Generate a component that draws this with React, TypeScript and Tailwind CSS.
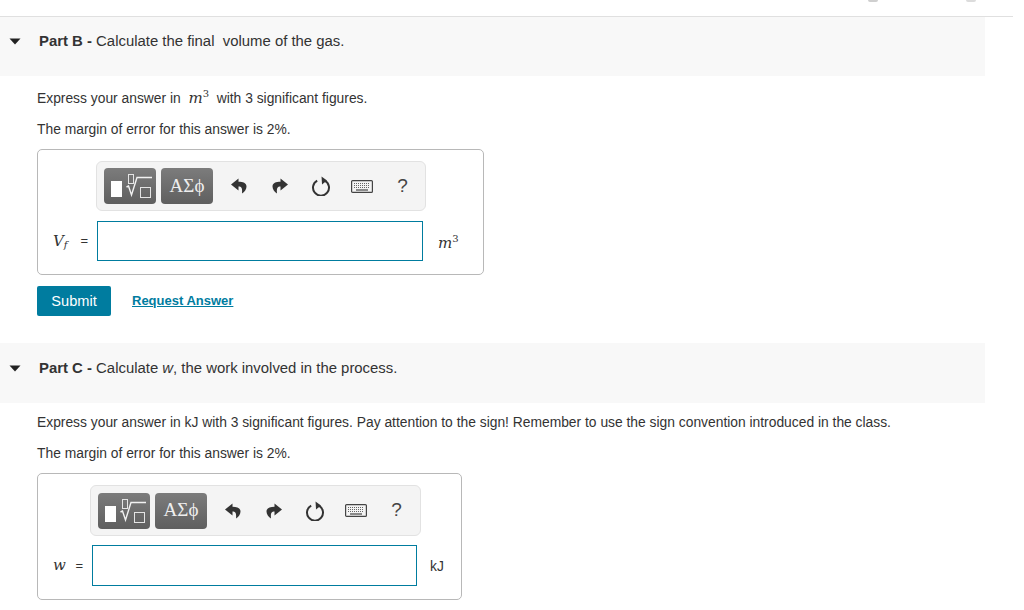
import React from "react";

const sans = "font-['Liberation_Sans',Arial,sans-serif]";
const mathFont = "font-['DejaVu_Serif','Liberation_Serif',serif]";
const greekFont = "font-['Liberation_Serif','Times_New_Roman',serif]";

const Caret = () => (
    <svg width="12" height="7" viewBox="0 0 12 7" className="block">
        <path d="M0.5 0.5h11L6 6.5z" fill="#222" />
    </svg>
);

const RadicalIcon = () => (
    <svg width="52" height="36" viewBox="0 0 52 36" fill="none" className="block">
        <rect x="7" y="13" width="11" height="16" fill="#fff" />
        <rect x="24.5" y="6.5" width="5" height="9" stroke="#e4e4e4" />
        <path d="M22.5 19l2-1 3 9 5.5-17.5h15" stroke="#f2f2f2" strokeWidth="1.4" />
        <rect x="36.5" y="19.5" width="10" height="10" stroke="#e4e4e4" />
    </svg>
);

const UndoIcon = () => (
    <svg width="16" height="16" viewBox="0 0 16 16" className="block">
        <path d="M7.5 0.5L0 6.5l7.5 6V8.6c3 0 4 1.4 3.5 6.9 3-2 4.5-4.5 4.5-7 0-3.5-3.5-4.7-8-4.7z" fill="#333" />
    </svg>
);

const RedoIcon = () => (
    <svg width="16" height="16" viewBox="0 0 16 16" className="block">
        <path d="M8.5 0.5L16 6.5l-7.5 6V8.6c-3 0-4 1.4-3.5 6.9-3-2-4.5-4.5-4.5-7 0-3.5 3.5-4.7 8-4.7z" fill="#333" />
    </svg>
);

const ResetIcon = () => (
    <svg width="20" height="20" viewBox="0 0 20 20" fill="none" className="block">
        <path d="M6.2 4.6a8 8 0 1 0 7.6 0" stroke="#333" strokeWidth="2" />
        <path d="M10.5 0.5l5.5 4-5 4z" fill="#333" />
    </svg>
);

const KeyboardIcon = () => (
    <svg width="22" height="13" viewBox="0 0 22 13" fill="none" className="block">
        <rect x="0.6" y="0.6" width="20.8" height="11.8" rx="1" stroke="#444" strokeWidth="1.2" fill="#f4f4f4" />
        <path d="M3 3.5h16M3 5.5h16M3 7.5h16" stroke="#666" strokeWidth="1" strokeDasharray="1 1" />
        <path d="M5 10h12" stroke="#444" strokeWidth="1.2" />
    </svg>
);

const ToolSlot = ({ children }: { children: React.ReactNode }) => (
    <div className="w-[41px] h-full flex items-center justify-center">{children}</div>
);

const Toolbar = ({ className }: { className: string }) => (
    <div className={`bg-[#f4f4f4] border border-[#e2e2e2] rounded-[6px] flex items-center pl-[7px] ${className}`}>
        <div className="w-[52px] h-[36px] rounded-[4px] bg-linear-to-b from-[#7c7c7c] to-[#5f5f5f]">
            <RadicalIcon />
        </div>
        <div className={`w-[52px] h-[36px] ml-[5px] rounded-[4px] bg-linear-to-b from-[#7c7c7c] to-[#5f5f5f] flex items-center justify-center text-[#eee] text-[19px] ${greekFont}`}>
            ΑΣϕ
        </div>
        <div className="ml-[5px] h-full flex items-center">
            <ToolSlot><UndoIcon /></ToolSlot>
            <ToolSlot><RedoIcon /></ToolSlot>
            <ToolSlot><ResetIcon /></ToolSlot>
            <ToolSlot><KeyboardIcon /></ToolSlot>
            <ToolSlot><span className="text-[19px] text-[#444]">?</span></ToolSlot>
        </div>
    </div>
);

const PartHeader = ({ className, children }: { className: string; children: React.ReactNode }) => (
    <div className={`w-[985px] bg-[#f8f8f8] flex ${className}`}>
        <div className="w-[39px] pl-[9px] pt-[7px]"><Caret /></div>
        <div className="text-[14.9px] leading-[20px] text-[#333]">{children}</div>
    </div>
);

const Cube = () => (
    <span className={`${mathFont} italic text-[15px]`}>m<sup className="not-italic text-[10px] -top-[6px]">3</sup></span>
);

const App = () => {
    return (
        <div className={`w-[1024px] h-[610px] overflow-hidden bg-white text-[#333] ${sans}`}>
            <div className="w-[1013px] h-[17px] border-b border-[#e0e0e0] relative">
                <div className="absolute left-[868px] top-0 w-[10px] h-[2px] rounded-b-full bg-[#cfcfcf]" />
                <div className="absolute left-[966px] top-0 w-[10px] h-[2px] rounded-b-full bg-[#dcdcdc]" />
            </div>

            <PartHeader className="h-[59px] pt-[14px]">
                <b>Part B - </b>Calculate the final&nbsp; volume of the gas.
            </PartHeader>

            <div className="pl-[37px]">
                <p className="mt-[12px] h-[21px] text-[13.83px] leading-[21px] whitespace-pre">
                    Express your answer in  <Cube />  with 3 significant figures.
                </p>
                <p className="mt-[10px] h-[21px] text-[13.83px] leading-[21px]">The margin of error for this answer is 2%.</p>

                <div className="mt-[9px] w-[447px] h-[126px] border border-[#b8b8b8] rounded-[5px] pt-[11px]">
                    <Toolbar className="ml-[58px] w-[330px] h-[50px]" />
                    <div className="mt-[10px] flex items-center">
                        <div className={`w-[59px] pl-[15px] flex items-center justify-between pr-[9px] ${mathFont} text-[15px]`}>
                            <span className="italic">V<sub className="text-[10px]">f</sub></span>
                            <span className={`${sans} text-[13px]`}>=</span>
                        </div>
                        <div className="w-[326px] h-[40px] border border-[#007c9f]" />
                        <div className="ml-[15px] pt-[3px]"><Cube /></div>
                    </div>
                </div>

                <div className="mt-[11px] flex items-center">
                    <div className="w-[74px] h-[30px] pt-[1px] bg-[#007c9f] rounded-[2px] text-white text-[14.6px] flex items-center justify-center">Submit</div>
                    <a className="ml-[21px] text-[13px] font-bold text-[#007c9f] underline">Request Answer</a>
                </div>
            </div>

            <div className="mt-[27px]">
                <PartHeader className="h-[60px] pt-[15px]">
                    <b>Part C - </b>Calculate <i>w</i>, the work involved in the process.
                </PartHeader>
            </div>

            <div className="pl-[37px]">
                <p className="mt-[9px] h-[21px] text-[13.83px] leading-[21px] whitespace-nowrap">
                    Express your answer in kJ with 3 significant figures. Pay attention to the sign! Remember to use the sign convention introduced in the class.
                </p>
                <p className="mt-[10px] h-[21px] text-[13.83px] leading-[21px]">The margin of error for this answer is 2%.</p>

                <div className="mt-[9px] w-[425px] h-[127px] border border-[#b8b8b8] rounded-[5px] pt-[11px]">
                    <Toolbar className="ml-[52px] w-[331px] h-[51px]" />
                    <div className="mt-[9px] flex items-center">
                        <div className={`w-[54px] pl-[15px] flex items-center justify-between pr-[9px] ${mathFont} text-[15px]`}>
                            <span className="italic">w</span>
                            <span className={`${sans} text-[13px]`}>=</span>
                        </div>
                        <div className="w-[325px] h-[41px] border border-[#007c9f]" />
                        <div className="ml-[13px] pt-[1px] text-[13.83px]">kJ</div>
                    </div>
                </div>
            </div>
        </div>
    );
};

export default App;
